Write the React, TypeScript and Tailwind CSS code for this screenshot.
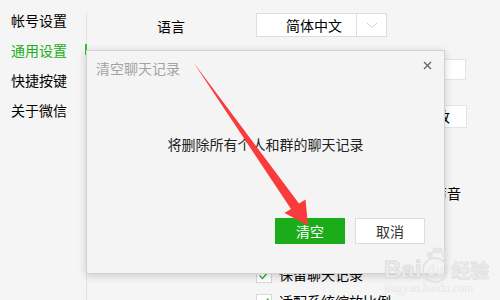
const font = { fontFamily: '"Noto Sans CJK SC", "Noto Sans", sans-serif' }

function Check() {
  return (
    <svg width="12" height="12" viewBox="0 0 12 12" fill="none">
      <path d="M1.5 6.5 L4.5 9.5 L10.5 2.5" stroke="#2aae2a" strokeWidth="1.3" />
    </svg>
  )
}

function CheckRow({ label, checked = true }: { label: string; checked?: boolean }) {
  return (
    <div className="flex h-[27px] items-center">
      <span className="flex h-[16px] w-[16px] items-center justify-center border border-[#d8d8d8] bg-white">
        {checked && <Check />}
      </span>
      <span className="ml-[7px] whitespace-nowrap text-[14px] text-black">{label}</span>
    </div>
  )
}

function PawLogo() {
  return (
    <span className="relative mx-[1px] flex h-[26px] w-[26px] items-center justify-center rounded-full border-2 border-[#e2e2e2] text-[13px] font-bold text-[#ececec]">
      du
      <svg className="absolute -top-[12px] left-[1px]" width="24" height="12" viewBox="0 0 24 12">
        <circle cx="5" cy="8" r="3" fill="#e4e4e4" />
        <circle cx="10" cy="3.5" r="3" fill="#e4e4e4" />
        <circle cx="15" cy="3.5" r="3" fill="#e4e4e4" />
        <circle cx="20" cy="8" r="3" fill="#e4e4e4" />
      </svg>
    </span>
  )
}

export default function App() {
  return (
    <div className="relative h-[300px] w-[500px] overflow-hidden bg-[#f5f5f5]" style={font}>
      <div className="flex h-full">
        {/* sidebar */}
        <div className="w-[86px] pl-[11px] pt-[5px] text-[14px]">
          <div className="h-[30px] leading-[30px] text-black">帐号设置</div>
          <div className="h-[30px] leading-[30px] text-[#1aad19]">通用设置</div>
          <div className="h-[30px] leading-[30px] text-black">快捷按键</div>
          <div className="h-[30px] leading-[30px] text-black">关于微信</div>
        </div>
        <div className="relative mt-[13px] w-px bg-[#e2e2e2]">
          <span className="absolute left-[-1px] top-[31px] h-[11px] w-[2px] bg-[#2ec52e]" />
        </div>

        {/* content */}
        <div className="flex flex-1 flex-col pt-[13px] text-[14px] text-black">
          <div className="flex h-[24px] items-center">
            <span className="ml-[70px] w-[99px] pt-[3px]">语言</span>
            <div className="flex h-[24px] w-[131px] border border-[#dddddd] bg-white">
              <span className="flex w-[100px] items-center pl-[29px]">简体中文</span>
              <span className="flex w-[30px] items-center justify-center border-l border-[#dddddd]">
                <svg width="12" height="7" viewBox="0 0 12 7" fill="none">
                  <path d="M1 1 L6 5.5 L11 1" stroke="#cfcfcf" strokeWidth="1" />
                </svg>
              </span>
            </div>
          </div>

          <div className="mt-[22px] flex h-[25px]">
            <span className="ml-[70px] w-[99px]">文件管理</span>
            <div className="w-[210px] border border-[#e4e4e4] bg-white" />
          </div>

          <div className="mt-[25px] flex h-[25px] justify-end pr-[33px]">
            <div className="flex w-[62px] items-center justify-center border border-[#e4e4e4] bg-white">
              更改
            </div>
          </div>

          <div className="ml-[169px] mt-[52px] flex flex-col">
            <CheckRow label="开启语音和视频通话提醒声音" />
            <CheckRow label="开启新消息通知声音" />
            <CheckRow label="自动下载文件" />
            <CheckRow label="保留聊天记录" />
            <CheckRow label="适配系统缩放比例" />
          </div>
        </div>
      </div>

      {/* dialog */}
      <div className="absolute left-[86px] top-[50px] flex h-[224px] w-[359px] flex-col border border-[#d2d2d2] bg-[#f4f4f4] shadow-[0_2px_8px_rgba(0,0,0,0.18)]">
        <div className="flex h-[34px] items-center justify-between pl-[9px] pr-[12px]">
          <span className="text-[14px] text-[#a3a3a3]">清空聊天记录</span>
          <svg width="9" height="9" viewBox="0 0 9 9" className="mb-[6px]">
            <path d="M1 1 L8 8 M8 1 L1 8" stroke="#666" strokeWidth="1.4" />
          </svg>
        </div>
        <div className="mt-[49px] text-center text-[14px] text-[#222]">将删除所有个人和群的聊天记录</div>
        <div className="mt-[63px] flex justify-end gap-[10px] pr-[19px]">
          <button className="h-[26px] w-[70px] bg-[#1aad19] text-[14px] text-white">清空</button>
          <button className="h-[26px] w-[70px] border border-[#dcdcdc] bg-white text-[14px] text-[#333]">取消</button>
        </div>
      </div>

      {/* watermark */}
      <div className="absolute left-[384px] top-[257px] flex flex-col items-start opacity-90">
        <div className="flex items-center">
          <span className="text-[24px] font-bold leading-[26px] text-[#ececec] [-webkit-text-stroke:1px_#dadada]" style={{ fontFamily: '"Liberation Sans", sans-serif' }}>
            Bai
          </span>
          <PawLogo />
          <span className="ml-[2px] text-[19px] font-bold leading-[26px] text-[#ececec] [-webkit-text-stroke:0.6px_#dadada]">经验</span>
        </div>
        <span className="-mt-[1px] text-[12px] leading-[12px] text-[#e6e6e6]" style={{ fontFamily: '"Liberation Serif", serif' }}>
          jingyan.baidu.com
        </span>
      </div>

      {/* red arrow */}
      <svg className="pointer-events-none absolute left-0 top-0" width="500" height="300" viewBox="0 0 500 300">
        <polygon points="193.5,62.5 299,203.5 305.5,199.5 308,225.5 284.5,213 291,209" fill="#fa3b3b" />
      </svg>
    </div>
  )
}
